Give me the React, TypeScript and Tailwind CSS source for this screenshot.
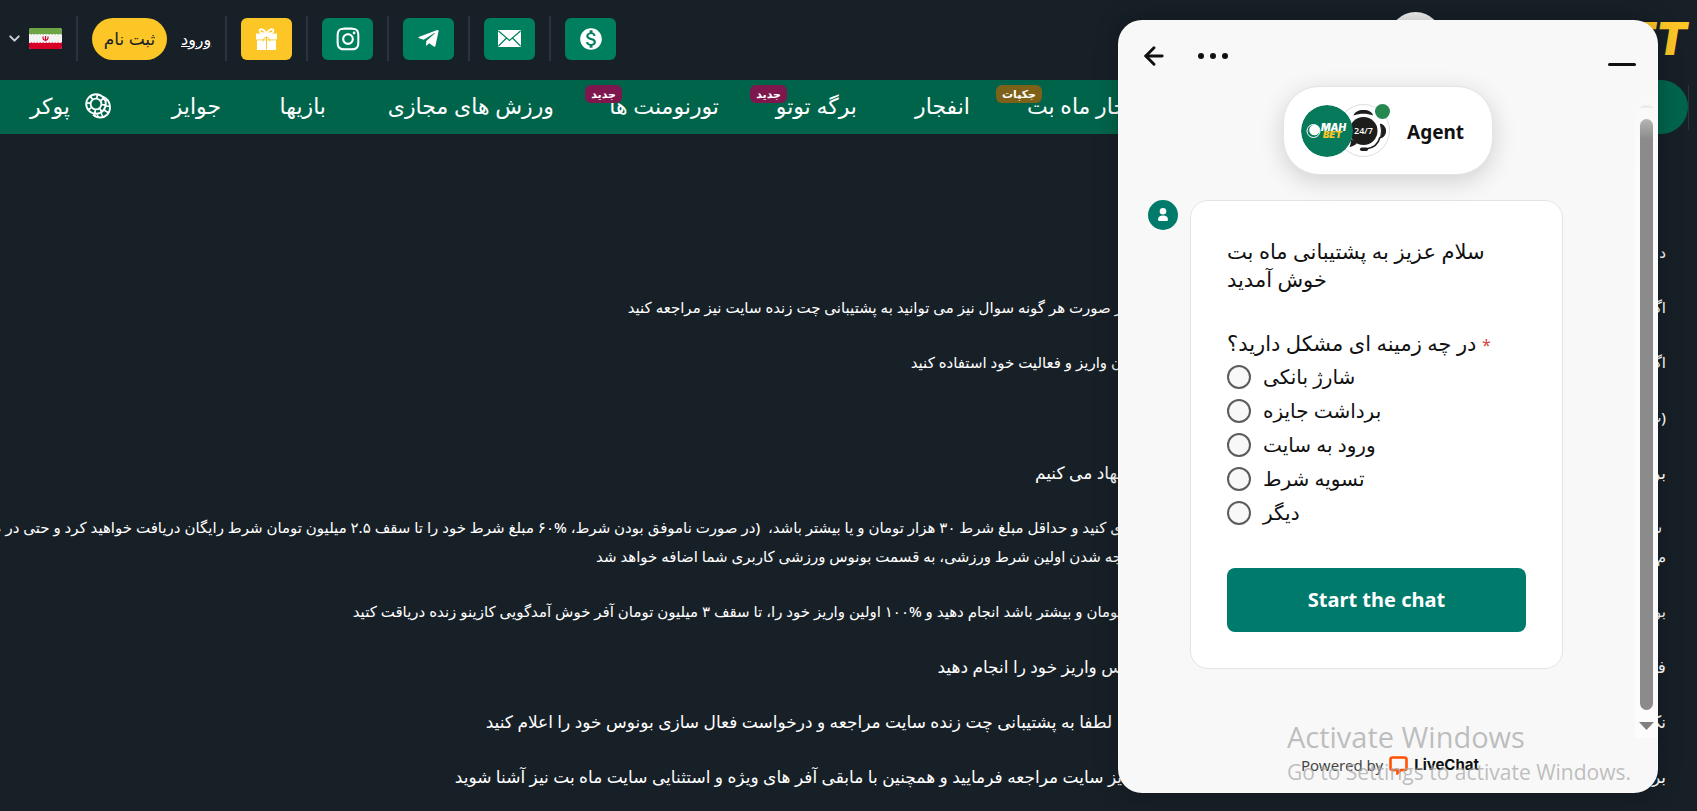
import { FaInstagram, FaTelegramPlane } from "react-icons/fa";
import { MdMonetizationOn } from "react-icons/md";
import { ArrowLeft, ChevronDown } from "lucide-react";
import type { ReactNode } from "react";

function GiftIcon() {
  return (
    <svg viewBox="0 0 21 22" className="h-[22px] w-[21px]" fill="#fff" aria-hidden="true">
      <path
        d="M10.500 5.500C8 .5 3.500.3 3.500 2.800c0 2 3 2.700 7 2.700zM10.500 5.500C13 .5 17.500.3 17.500 2.800c0 2-3 2.700-7 2.700z"
        fill="none"
        stroke="#fff"
        strokeWidth="1.700"
      />
      <path d="M0 5.500h21v6H0z" />
      <path d="M1 12.300h19V22H1z" />
      <path d="M10.500 9v12.500M6.800 13.500c.2-2.200 1.500-3.800 3.700-4.300 2.200.5 3.500 2.100 3.700 4.300" fill="none" stroke="#fcc627" strokeWidth="1" />
    </svg>
  );
}

function MailIcon() {
  return (
    <svg viewBox="0 0 23 17" className="h-[17px] w-[23px]" aria-hidden="true">
      <rect width="23" height="17" rx="1" fill="#fff" />
      <path d="M0.5 1l11 9.500L22.500 1M0.5 16l8-8M22.500 16l-8-8" fill="none" stroke="#007f5e" strokeWidth="1.200" />
    </svg>
  );
}

function ChipsIcon() {
  return (
    <svg viewBox="0 0 26 26" className="h-[26px] w-[26px] shrink-0" fill="none" stroke="#fff" aria-hidden="true">
      <path d="M18 3.500c4 2 7 6 7 11 0 6-4.500 10-9.500 10-3 0-5.500-1-7.500-3" strokeWidth="1.800" />
      <path d="M20 8l3.500-1M21 13l4 .5M19 17l4 2.500M16 20l2 4M12.500 21.500l.5 3" strokeWidth="1.500" />
      <circle cx="11" cy="11" r="9.800" strokeWidth="1.900" />
      <circle cx="11" cy="11" r="5.400" strokeWidth="1.900" />
      <circle cx="11" cy="11" r="7.600" strokeWidth="3.600" strokeDasharray="1.800 4.169" />
    </svg>
  );
}

function Flag() {
  return (
    <svg viewBox="0 0 33 21" className="h-[21px] w-[33px]" role="img" aria-label="فارسی">
      <clipPath id="flag-shape">
        <rect width="33" height="21" rx="2.500" />
      </clipPath>
      <g clipPath="url(#flag-shape)">
        <rect width="33" height="21" fill="#f3f3f3" />
        <rect width="33" height="6.500" fill="#6ea544" />
        <rect y="14.500" width="33" height="6.500" fill="#d80027" />
        <path d="M0 6.500h33" stroke="#f3f3f3" strokeDasharray="1.500 1.500" />
        <path d="M0 14.500h33" stroke="#f3f3f3" strokeDasharray="1.500 1.500" />
        <path d="M14 8.500c-.3 2.500.8 3.700 2.500 3.700s2.800-1.200 2.500-3.700M16.500 8v5.200" fill="none" stroke="#d80027" strokeWidth="1.200" />
      </g>
    </svg>
  );
}

function Divider() {
  return <span className="h-[45px] w-[2px] shrink-0 bg-[#2c333d]" />;
}

function IconButton({ label, tone, children }: { label: string; tone: string; children: ReactNode }) {
  return (
    <button
      type="button"
      aria-label={label}
      className={`flex h-[42px] w-[51px] shrink-0 items-center justify-center rounded-md text-white ${tone}`}
    >
      {children}
    </button>
  );
}

const newBadge = "-mr-2 bg-[#7f174f]";
const jackpotBadge = "-mr-3 bg-[#7d6119]";

const navItems = [
  { label: "پوکر", width: "w-[78px]", icon: true },
  { label: "جوایز", width: "w-[50px]" },
  { label: "بازیها", width: "w-[45px]" },
  { label: "ورزش های مجازی", width: "w-[168px]" },
  { label: "تورنومنت ها", width: "w-[105px]", badge: "جدید", badgeStyle: newBadge },
  { label: "برگه توتو", width: "w-[78px]", badge: "جدید", badgeStyle: newBadge },
  { label: "انفجار", width: "w-[53px]" },
  { label: "انفجار ماه بت", width: "w-[121px]", badge: "جکپات", badgeStyle: jackpotBadge },
];

const small = "text-[15px]";
const large = "text-[17px]";

const paragraphs: { size: string; lines: { start: string; end: string }[] }[] = [
  { size: small, lines: [{ start: "د", end: "" }] },
  {
    size: small,
    lines: [{ start: "اگ", end: "ر صورت هر گونه سوال نیز می توانید به پشتیبانی چت زنده سایت نیز مراجعه کنید" }],
  },
  { size: small, lines: [{ start: "اگ", end: "ن واریز و فعالیت خود استفاده کنید" }] },
  { size: small, lines: [{ start: "(ب", end: "" }] },
  { size: large, lines: [{ start: "بر", end: "نهاد می کنیم" }] },
  {
    size: small,
    lines: [
      {
        start: " ش",
        end: "ی کنید و حداقل مبلغ شرط ۳۰ هزار تومان و یا بیشتر باشد،  (در صورت ناموفق بودن شرط، %۶۰ مبلغ شرط خود را تا سقف ۲.۵ میلیون تومان شرط رایگان دریافت خواهید کرد و حتی در ص",
      },
      { start: "م", end: "جه شدن اولین شرط ورزشی، به قسمت بونوس ورزشی کاربری شما اضافه خواهد شد" },
    ],
  },
  {
    size: small,
    lines: [
      {
        start: "بو",
        end: "تومان و بیشتر باشد انجام دهید و %۱۰۰ اولین واریز خود را، تا سقف ۳ میلیون تومان آفر خوش آمدگویی کازینو زنده دریاقت کتید",
      },
    ],
  },
  { size: large, lines: [{ start: "فـ", end: "س واریز خود را انجام دهید" }] },
  {
    size: large,
    lines: [
      {
        start: "نک",
        end: "، لطفا به پشتیبانی چت زنده سایت مراجعه و درخواست فعال سازی بونوس خود را اعلام کنید",
      },
    ],
  },
  {
    size: large,
    lines: [
      {
        start: "بر",
        end: "یز سایت مراجعه فرمایید و همچنین با مابقی آفر های ویژه و استثنایی سایت ماه بت نیز آشنا شوید",
      },
    ],
  },
];

const topics = ["شارژ بانکی", "برداشت جایزه", "ورود به سایت", "تسویه شرط", "دیگر"];

function Header() {
  return (
    <header className="flex h-20 items-start justify-between pr-[10px] pl-[6px]">
      <div className="flex items-center gap-[14px] pt-4">
        <button type="button" aria-label="زبان" className="flex items-center gap-[6px] text-[#d0d3d6]">
          <ChevronDown className="h-[17px] w-[17px]" strokeWidth={2.8} />
          <Flag />
        </button>
        <Divider />
        <button type="button" className="h-[42px] w-[75px] rounded-full bg-[#fcc627] text-[17px] font-medium text-[#181f28]">
          ثبت نام
        </button>
        <a href="#login" className="w-[30px] text-center text-base font-medium whitespace-nowrap text-white underline">
          ورود
        </a>
        <Divider />
        <IconButton label="هدیه" tone="bg-[#fcc627]">
          <GiftIcon />
        </IconButton>
        <Divider />
        <IconButton label="اینستاگرام" tone="bg-[#007f5e]">
          <FaInstagram className="h-[26px] w-[26px]" />
        </IconButton>
        <Divider />
        <IconButton label="تلگرام" tone="bg-[#007f5e]">
          <FaTelegramPlane className="h-[23px] w-[23px]" />
        </IconButton>
        <Divider />
        <IconButton label="ایمیل" tone="bg-[#007f5e]">
          <MailIcon />
        </IconButton>
        <Divider />
        <IconButton label="واریز" tone="bg-[#007f5e]">
          <MdMonetizationOn className="h-[26px] w-[26px]" />
        </IconButton>
      </div>
      <a href="#home" className="flex items-center gap-[156px] pt-3">
        <span className="h-[53px] w-[53px] rounded-full bg-[#f1f1f1]" />
        <span className="font-['Inter'] text-[45px] leading-[53px] font-black text-[#fcc627] italic">BET</span>
      </a>
    </header>
  );
}

function MainNav() {
  return (
    <div className="flex items-center pr-2">
      <nav className="flex h-[54px] min-w-0 grow items-center gap-[60px] rounded-r-full bg-[#00644b] pb-[3px] pl-[33px]">
        {navItems.map((item) => (
          <a
            key={item.label}
            href="#section"
            className={`relative flex shrink-0 items-center justify-end gap-[15px] text-[22px] font-medium whitespace-nowrap text-white ${item.width}`}
          >
            <span dir="rtl">{item.label}</span>
            {item.icon && <ChipsIcon />}
            {item.badge && (
              <span
                className={`absolute -top-1 right-full rounded-md px-[6px] text-[11px] leading-[18px] font-bold ${item.badgeStyle}`}
              >
                {item.badge}
              </span>
            )}
          </a>
        ))}
      </nav>
      <span className="h-[45px] w-px shrink-0 bg-[#2c333d]" />
    </div>
  );
}

function Article() {
  return (
    <main dir="rtl" className="flex flex-col gap-[26px] pt-[104px] pr-[31px] font-medium text-white">
      {paragraphs.map((paragraph, i) => (
        <div key={i} className={paragraph.size}>
          {paragraph.lines.map((line) => (
            <p key={line.start + line.end} className="flex leading-[29px] whitespace-pre">
              <span className="w-[544px] shrink-0">{line.start}</span>
              <span>{line.end}</span>
            </p>
          ))}
        </div>
      ))}
    </main>
  );
}

function BrandAvatar() {
  return (
    <svg viewBox="0 0 52 52" className="h-[52px] w-[52px] rounded-full" role="img" aria-label="MAH BET">
      <circle cx="26" cy="26" r="26" fill="#087a5c" />
      <circle cx="12.500" cy="26" r="6.500" fill="none" stroke="#fff" strokeWidth="1" />
      <circle cx="13.500" cy="25" r="5.300" fill="#fff" />
      <text x="20" y="25.500" fill="#fff" fontFamily="Inter" fontWeight="900" fontStyle="italic" fontSize="10">
        MAH
      </text>
      <text x="22" y="33" fill="#fcc627" fontFamily="Inter" fontWeight="900" fontStyle="italic" fontSize="9.500">
        BET
      </text>
    </svg>
  );
}

function SupportAvatar() {
  return (
    <svg viewBox="0 0 53 53" className="h-[53px] w-[53px]" role="img" aria-label="24/7">
      <circle cx="26.500" cy="26.500" r="26" fill="#fff" stroke="#dcdcdc" />
      <path d="M16.500 11.500c1-3.500 5-5.500 10-5.500s9 2 9.500 5.500c-6-2.500-13-2.500-19.500 0z" fill="#1d1d1b" />
      <circle cx="26.500" cy="27" r="14" fill="#1d1d1b" />
      <path d="M14 35c0 3-.5 6-1.500 8 3-.5 6-2 7.500-4z" fill="#1d1d1b" />
      <path d="M43.500 20q5 1.500 5 7t-5 7q2-7 0-14z" fill="#1d1d1b" stroke="#1d1d1b" />
      <path d="M43 33c-1.500 7-7 11-14 12" fill="none" stroke="#1d1d1b" strokeWidth="1.500" />
      <rect x="23" y="43.500" width="8" height="3.500" rx="1.700" fill="#1d1d1b" />
      <text x="26.500" y="30" textAnchor="middle" fill="#fff" fontFamily="Open Sans" fontWeight="600" fontSize="9">
        24/7
      </text>
    </svg>
  );
}

function ChatWidget() {
  return (
    <aside
      aria-label="LiveChat"
      className="absolute top-5 right-[39px] bottom-[18px] flex w-[540px] flex-col overflow-hidden rounded-3xl bg-[#f8f8f8] font-['Noto_Sans','DejaVu_Sans',sans-serif] text-[#111] shadow-[0_0_24px_rgba(0,0,0,0.25)]"
    >
      <div className="flex h-[66px] shrink-0 items-start justify-between px-[22px] pt-[22px]">
        <div className="flex items-center gap-[30px]">
          <button type="button" aria-label="Back">
            <ArrowLeft className="h-7 w-7" strokeWidth={2.5} />
          </button>
          <button type="button" aria-label="More" className="flex gap-[6px]">
            <span className="h-[6px] w-[6px] rounded-full bg-[#111]" />
            <span className="h-[6px] w-[6px] rounded-full bg-[#111]" />
            <span className="h-[6px] w-[6px] rounded-full bg-[#111]" />
          </button>
        </div>
        <button type="button" aria-label="Minimize" className="flex h-6 w-7 items-end">
          <span className="h-[3px] w-7 rounded-full bg-[#111]" />
        </button>
      </div>

      <div className="flex min-h-0 grow">
        <div className="flex grow flex-col pl-[30px]">
          <div className="relative ml-[135px] flex h-[89px] w-[210px] shrink-0 items-center rounded-[36px] border border-[#e4e4e4] bg-white pl-[17px] shadow-[0_6px_24px_rgba(0,0,0,0.16)]">
            <div className="relative z-10">
              <BrandAvatar />
            </div>
            <div className="relative -ml-4">
              <SupportAvatar />
              <span className="absolute top-0 right-0 h-[15px] w-[15px] rounded-full bg-[#268750]" />
            </div>
            <span className="ml-[17px] pt-1 text-[19px] font-bold">Agent</span>
          </div>

          <div className="mt-[25px] flex items-start gap-3">
            <span className="flex h-[30px] w-[30px] items-center justify-center rounded-full bg-[#007a6b]">
              <svg viewBox="0 0 10 14" className="h-[14px] w-[10px]" fill="#fff" aria-hidden="true">
                <circle cx="5" cy="3.300" r="3.300" />
                <path d="M0 11.500c0-2.500 2-4 5-4s5 1.500 5 4q0 1.500-1.500 1.500h-7Q0 13 0 11.500z" />
              </svg>
            </span>
            <form
              className="w-[373px] rounded-[18px] border border-[#e4e4e4] bg-white px-9 pt-9 pb-9"
              onSubmit={(event) => event.preventDefault()}
            >
              <p className="text-[21px] leading-7">
                سلام عزیز به پشتیبانی ماه بت
                <br />
                خوش آمدید
              </p>
              <fieldset className="mt-9">
                <legend className="text-[21px] leading-7">
                  در چه زمینه ای مشکل دارید؟ <span className="text-base text-[#d64545]">*</span>
                </legend>
                <div className="flex flex-col gap-[6px] pt-[6px]">
                  {topics.map((topic) => (
                    <label key={topic} className="flex h-7 items-center gap-3 text-[20px]">
                      <input
                        type="radio"
                        name="topic"
                        className="h-6 w-6 appearance-none rounded-full border-2 border-[#5c5c5c] bg-[#f8f8f8]"
                      />
                      {topic}
                    </label>
                  ))}
                </div>
              </fieldset>
              <button
                type="submit"
                className="mt-[41px] h-16 w-full rounded-lg bg-[#007a6b] text-[20px] font-bold text-white"
              >
                Start the chat
              </button>
            </form>
          </div>
        </div>

        <div className="flex w-[23px] shrink-0 flex-col items-center bg-[linear-gradient(#f8f8f8,#fcfcfc_80px)] pt-[19px]">
          <span className="mb-[11px] h-[3px] w-[15px] shrink-0 bg-[#ececec] [clip-path:polygon(30%_0,70%_0,100%_100%,0_100%)]" />
          <span className="w-[13px] grow rounded-full bg-[linear-gradient(#b5b5b5,#8b8b8b_20px)]" />
          <span className="mt-3 mb-2 h-2 w-[15px] shrink-0 bg-[#7f7f7f] [clip-path:polygon(0_0,100%_0,50%_100%)]" />
        </div>
      </div>

      <div className="flex h-[55px] shrink-0 items-center gap-[6px] pl-[183px] text-[15px]">
        <span className="text-[#444]">Powered by</span>
        <svg viewBox="0 0 19 19" className="h-[19px] w-[19px]" aria-hidden="true">
          <path
            d="M3.500 1.500h12q2 0 2 2v8.500q0 2-2 2h-3.500l-3.500 3v-3h-5q-2 0-2-2v-8.500q0-2 2-2z"
            fill="none"
            stroke="#ff5100"
            strokeWidth="2.600"
          />
        </svg>
        <a href="#livechat" className="font-['Inter'] text-[15px] font-bold">
          LiveChat
        </a>
      </div>
    </aside>
  );
}

export default function App() {
  return (
    <div className="relative h-screen overflow-hidden bg-[#171f27] font-['Noto_Sans','DejaVu_Sans',sans-serif]">
      <Header />
      <MainNav />
      <Article />
      <ChatWidget />
      <div className="pointer-events-none absolute right-[66px] bottom-[22px] font-['Open_Sans'] text-[#aaa]/75">
        <p className="text-[29px] leading-9">Activate Windows</p>
        <p className="text-[21px] leading-[34px]">Go to Settings to activate Windows.</p>
      </div>
    </div>
  );
}
